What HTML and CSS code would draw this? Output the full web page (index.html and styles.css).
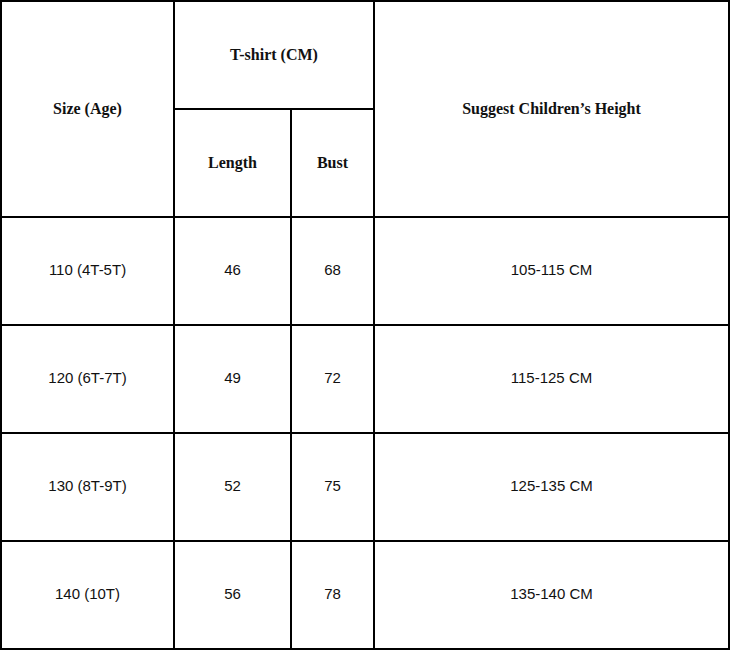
FILE: index.html
```html
<!DOCTYPE html>
<html>
<head>
<meta charset="utf-8">
<link rel="stylesheet" href="styles.css">
</head>
<body>
<div class="table">
  <div class="cell head size">Size (Age)</div>
  <div class="cell head tshirt">T-shirt (CM)</div>
  <div class="cell head height">Suggest Children’s Height</div>
  <div class="cell head">Length</div>
  <div class="cell head">Bust</div>

  <div class="cell">110 (4T-5T)</div>
  <div class="cell">46</div>
  <div class="cell">68</div>
  <div class="cell">105-115 CM</div>

  <div class="cell">120 (6T-7T)</div>
  <div class="cell">49</div>
  <div class="cell">72</div>
  <div class="cell">115-125 CM</div>

  <div class="cell">130 (8T-9T)</div>
  <div class="cell">52</div>
  <div class="cell">75</div>
  <div class="cell">125-135 CM</div>

  <div class="cell">140 (10T)</div>
  <div class="cell">56</div>
  <div class="cell">78</div>
  <div class="cell">135-140 CM</div>
</div>
</body>
</html>
```

FILE: styles.css
```css
html, body {
  margin: 0;
  padding: 0;
  background: #fff;
}
.table {
  display: grid;
  width: 726px;
  grid-template-columns: 171px 115px 81px 353px;
  grid-template-rows: repeat(6, 106px);
  gap: 2px;
  padding: 2px;
  background: #000;
}
.cell {
  background: #fff;
  display: flex;
  align-items: center;
  justify-content: center;
  padding-bottom: 3px;
  font-family: "Liberation Sans", Arial, sans-serif;
  font-size: 15px;
  color: #111;
}
.head {
  padding-bottom: 1px;
  font-family: "Liberation Serif", "Times New Roman", serif;
  font-weight: bold;
  font-size: 16px;
}
.size {
  grid-row: span 2;
}
.tshirt {
  grid-column: span 2;
}
.height {
  grid-row: span 2;
}
```
